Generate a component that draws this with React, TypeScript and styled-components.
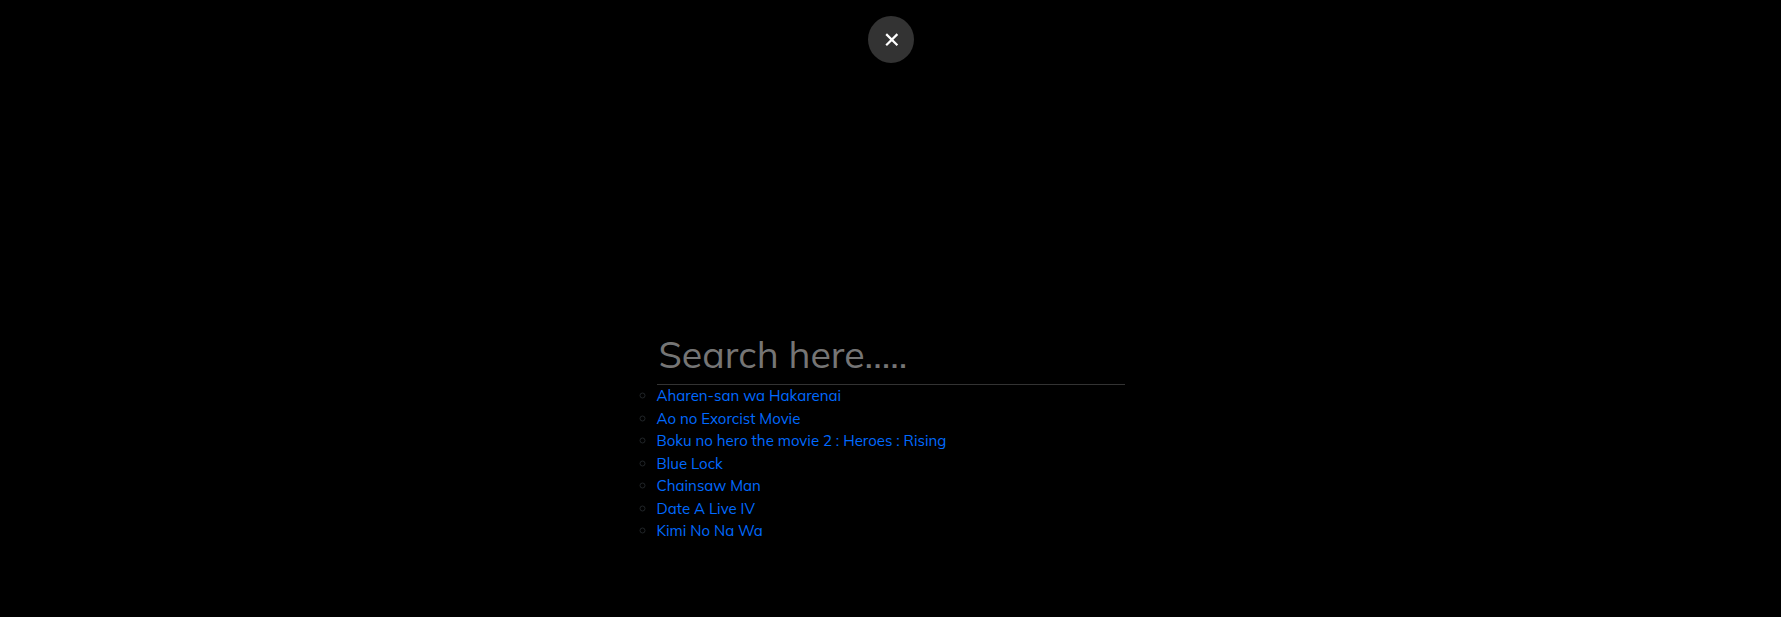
import React from "react";
import styled, { createGlobalStyle } from "styled-components";

const GlobalStyle = createGlobalStyle`
  * { box-sizing: border-box; }
  body {
    margin: 0;
    background: #000;
    color: #212529;
    font-family: Mulish, Lato, sans-serif;
    font-size: 15px;
    font-weight: 400;
    line-height: 22.5px;
  }
`;

const Overlay = styled.main`
  height: 617px;
  padding-top: 16px;
  overflow: hidden;
  display: flex;
  flex-direction: column;
  align-items: center;
  background: #000;
`;

const CloseButton = styled.button`
  width: 46px;
  height: 47px;
  margin-left: 1px;
  padding: 0;
  border: 0;
  border-radius: 50%;
  background: #333;
  display: flex;
  align-items: center;
  justify-content: center;
  cursor: pointer;
`;

const SearchForm = styled.form`
  width: 468px;
  margin-top: 263px;
`;

const SearchInput = styled.input`
  display: block;
  width: 100%;
  height: 59px;
  padding: 0 2px 3px;
  border: 0;
  border-bottom: 1px solid #333;
  border-radius: 0;
  outline: 0;
  background: transparent;
  color: #999;
  font-family: inherit;
  font-size: 37.5px;

  &::placeholder {
    color: #757575;
    opacity: 1;
  }
`;

const Results = styled.ul`
  margin: 0;
  padding: 0;
  list-style: circle;
`;

const Result = styled.li`
  height: 22.5px;
`;

const ResultLink = styled.a`
  color: #006aff;
  text-decoration: none;
  white-space: nowrap;
`;

const titles = [
  "Aharen-san wa Hakarenai",
  "Ao no Exorcist Movie",
  "Boku no hero the movie 2 : Heroes : Rising",
  "Blue Lock",
  "Chainsaw Man",
  "Date A Live IV",
  "Kimi No Na Wa",
];

export default function App() {
  return (
    <>
      <GlobalStyle />
      <Overlay>
        <CloseButton type="button" aria-label="Close">
          <svg width="16" height="15" viewBox="0 0 16 15" stroke="#fff" strokeWidth="2.2" fill="none">
            <path d="M3.2 2.1L14.4 13.3M14.4 2.1L3.2 13.3" />
          </svg>
        </CloseButton>
        <SearchForm>
          <SearchInput type="text" placeholder="Search here....." />
          <Results>
            {titles.map((name) => (
              <Result key={name}>
                <ResultLink href="#">{name}</ResultLink>
              </Result>
            ))}
          </Results>
        </SearchForm>
      </Overlay>
    </>
  );
}
